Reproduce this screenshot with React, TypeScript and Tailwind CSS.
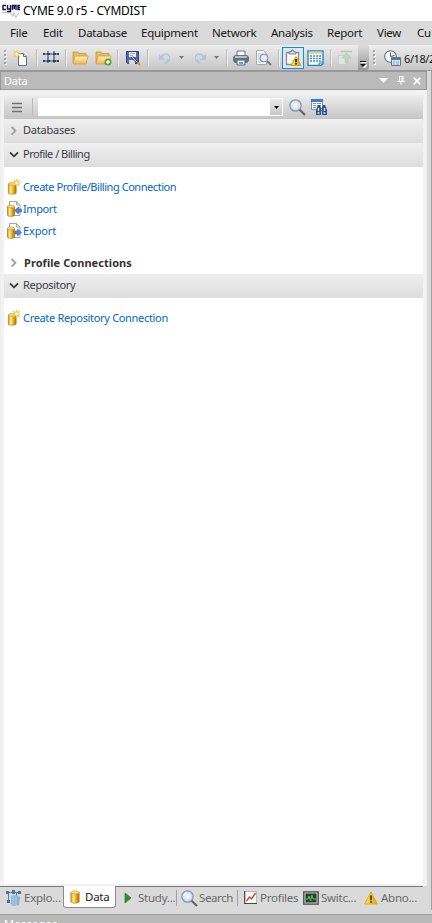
import React from "react";

type IconProps = { className?: string };
type Kids = { children?: React.ReactNode; className?: string; w?: number; h?: number };

function Icon({ children, className = "", w = 16, h = 16 }: Kids) {
  return (
    <svg className={`block shrink-0 ${className}`} width={w} height={h} viewBox={`0 0 ${w} ${h}`} fill="none">
      {children}
    </svg>
  );
}

function Gradients() {
  return (
    <svg width="0" height="0" className="absolute">
      <defs>
        <linearGradient id="gold" x1="0" x2="1" y1="0" y2="0">
          <stop offset="0" stopColor="#c58a16" />
          <stop offset=".3" stopColor="#fff0a0" />
          <stop offset=".6" stopColor="#efb51c" />
          <stop offset="1" stopColor="#a96d08" />
        </linearGradient>
        <linearGradient id="folder" x1="0" x2="0" y1="0" y2="1">
          <stop offset="0" stopColor="#fff0b8" />
          <stop offset="1" stopColor="#ecb952" />
        </linearGradient>
        <radialGradient id="lens">
          <stop offset="0" stopColor="#ffffff" />
          <stop offset="1" stopColor="#bdd3f6" />
        </radialGradient>
        <linearGradient id="warn" x1="0" x2="1" y1="0" y2="0">
          <stop offset="0" stopColor="#ffe54a" />
          <stop offset="1" stopColor="#eda500" />
        </linearGradient>
      </defs>
    </svg>
  );
}

const Logo = () => (
  <Icon w={18} h={16}>
    <path d="M0 9.5h7l2 1 2 3 1-4 2 5 2-4h1" stroke="#b4b4c4" strokeWidth=".8" />
    <path
      d="M4 2.5H1v4h3M5.5 2v4h3M8.5 2v6.5H5M10.5 7V2.5h3.5V7M12.3 2.5V6M18 2.5h-2v4h2M16 4.5h2"
      stroke="#11114f"
      strokeWidth="1.4"
    />
  </Icon>
);

const NewFile = () => (
  <Icon>
    <path d="M5.5 3.5h5l3 3v9h-8z" fill="#fff" stroke="#66758c" />
    <path d="M10.5 3.5v3h3" stroke="#66758c" fill="#dce6f5" />
    <path d="M4 0v8M0 4h8M1 1l6 6M7 1L1 7" stroke="#eccb5c" strokeWidth="1.1" />
    <circle cx="4" cy="4" r="1.5" fill="#fffbd8" />
  </Icon>
);

const Network = () => (
  <Icon>
    <path d="M1 4h14M1 11h14M5 1v12M11 1v12" stroke="#27456f" strokeWidth="1.1" />
    <path d="M0 3h2v2H0zM14 3h2v2h-2zM0 10h2v2H0zM14 10h2v2h-2zM4 3h3v2H4zM10 3h3v2h-3zM4 10h3v2H4zM10 10h3v2h-3z" fill="#27456f" />
  </Icon>
);

const Folder = ({ plus = false }: { plus?: boolean }) => (
  <Icon w={17}>
    <path d="M1 13V2h5l1 1.5h7V13z" fill="#e7bb62" stroke="#c99537" strokeWidth=".8" />
    <path d="M1 14L3 6h13l-2 8z" fill="url(#folder)" stroke="#d09b3c" strokeWidth=".8" />
    {plus && (
      <>
        <circle cx="13" cy="12" r="3.5" fill="#5ca226" />
        <path d="M13 10v4M11 12h4" stroke="#fff" strokeWidth="1.3" />
      </>
    )}
  </Icon>
);

const Save = () => (
  <Icon>
    <path d="M1.5 1.5h12v12h-11l-1-1z" fill="#5868b8" stroke="#303e83" />
    <path d="M4 2h7v5H4z" fill="#e9eef9" />
    <path d="M5 3.5h5M5 5.5h3" stroke="#9ba8cb" />
    <path d="M4 10h6v4H4z" fill="#d5d9e8" />
    <path d="M7 7l6 6" stroke="#39424d" strokeWidth="2.4" />
    <path d="M7 7l5 5" stroke="#e0e0d6" strokeWidth="1" />
    <path d="M12 12l3 3" stroke="#c2903b" strokeWidth="2" />
  </Icon>
);

const Undo = ({ flip = false }: { flip?: boolean }) => (
  <Icon w={14} h={14} className={flip ? "-scale-x-100" : ""}>
    <path d="M1 3v6h6z" fill="#b4c3df" />
    <path d="M3.5 6C6 2.5 12 2.500 11 7.500c-.5 2.500-2 4-4.500 5" stroke="#b4c3df" strokeWidth="2.400" />
    <path d="M5 5.500c3-2.500 7-1 5.500 2.500" stroke="#dce5f5" strokeWidth=".8" />
  </Icon>
);

const Printer = () => (
  <Icon>
    <path d="M4 6V1h8v5" fill="#f9fbff" stroke="#687485" />
    <path d="M2 5h12l2 2v4l-2 2H2l-2-2V7z" fill="#68727f" />
    <path d="M2 6h12v2H2z" fill="#b8bec6" />
    <path d="M4 10h8v5H4z" fill="#e7f2ff" stroke="#586779" />
    <path d="M6 12h4v2H6z" fill="#5ea5df" />
  </Icon>
);

const Preview = () => (
  <Icon w={17}>
    <path d="M1.5.5h7l3 3v11h-10z" fill="#f8f8f8" stroke="#a3a8ae" />
    <path d="M3 4h5M3 6h4M3 8h3M3 10h3M3 12h4" stroke="#b9c0c9" />
    <circle cx="9" cy="8" r="4" fill="url(#lens)" stroke="#8594ab" />
    <path d="M12 11l4 4" stroke="#88756c" strokeWidth="2" />
  </Icon>
);

const Warning = ({ size = 14 }: { size?: number }) => (
  <svg className="block shrink-0" width={size} height={size} viewBox="0 0 14 14">
    <path d="M7 1L13.4 13H.6z" fill="url(#warn)" stroke="#dca518" strokeWidth=".9" strokeLinejoin="round" />
    <path d="M7 4.5v4.7M7 10.3v1.5" stroke="#222" strokeWidth="1.5" />
  </svg>
);

const Clipboard = () => (
  <Icon w={18} h={18}>
    <path d="M2.5 3.5h12v12h-12z" fill="#fff" stroke="#9b8a70" strokeWidth="1.3" />
    <path d="M5 5V3h2l1-2h1l1 2h2v2z" fill="#e2e5e9" stroke="#7b7c80" />
    <path d="M12 7.5L17 16.5H7z" fill="url(#warn)" stroke="#d7a100" strokeLinejoin="round" />
    <path d="M12 10v3.2M12 14v1.5" stroke="#111" strokeWidth="1.5" />
  </Icon>
);

const Table = () => (
  <Icon w={17}>
    <path d="M1 .8h15v13l-2 1.5H1z" fill="#fff" stroke="#1683c4" strokeWidth="1.3" />
    <path d="M2 2h13v2H2z" fill="#ecd283" />
    <path d="M3 6h2M6 6h2M9 6h2M12 6h2M3 8.5h2M6 8.5h2M9 8.5h2M12 8.5h2M3 11h2M6 11h2M9 11h2M12 11h2" stroke="#3e8fca" strokeWidth="1.4" />
    <path d="M12 15v-2h4" stroke="#1683c4" />
  </Icon>
);

const Upload = () => (
  <Icon>
    <path d="M1.5 5.5h8v9h-8z" fill="#e0e6e6" stroke="#c2cfcf" />
    <path d="M4 1.5h11" stroke="#b3c8a8" strokeWidth="1.5" />
    <path d="M9.5 3L14 8h-3v5H8V8H5z" fill="#c6d6ba" stroke="#b2c4a5" strokeWidth=".6" />
  </Icon>
);

const Clock = () => (
  <Icon w={17}>
    <circle cx="6.5" cy="6.5" r="5.8" fill="#f8f8f8" stroke="#69717b" strokeWidth="1.1" />
    <path d="M6.5 2.5v4l4-1" stroke="#4b5867" />
    <path d="M7.5 7.5h9v8h-9z" fill="#d7e4ef" stroke="#567691" />
    <path d="M8 8h8v2H8z" fill="#547899" />
    <path d="M9 12h2M12 12h3M9 14h2M12 14h3" stroke="#8ba6bc" />
  </Icon>
);

const Search = () => (
  <Icon w={17} h={17}>
    <circle cx="6.5" cy="6.5" r="5.7" fill="url(#lens)" stroke="#8993a9" strokeWidth="1.2" />
    <path d="M2.5 6a4 4 0 0 1 3-3" stroke="#fff" strokeWidth="1.2" />
    <path d="M10.7 10.7L16 16" stroke="#65615f" strokeWidth="2.1" />
  </Icon>
);

const FindTable = () => (
  <Icon w={17} h={17}>
    <path d="M.5.5h11v10H.5z" fill="#fff" stroke="#6f8fc6" />
    <path d="M0 0h12v3H0z" fill="#3f78d7" />
    <path d="M2 4.5h3M6 4.5h4M2 6.5h3M6 6.5h4M2 8.5h3" stroke="#8793a5" />
    <path d="M7 6h2l1 3h1l1-3h2l2 5v5h-5v-4h-1v4H5v-5z" fill="#29518e" />
    <path d="M7.5 9v3M6.5 14h2M13.5 9v3M12.5 14h2M10 10.5h1" stroke="#dceafd" strokeWidth="1.4" />
  </Icon>
);

const NewDatabase = () => (
  <Icon w={14}>
    <path d="M1.3 5v9c0 1.6 7.9 1.6 7.9 0V5z" fill="url(#gold)" stroke="#b57e13" strokeWidth=".6" />
    <ellipse cx="5.2" cy="5" rx="3.9" ry="1.4" fill="#f7dd78" stroke="#bb8b2a" strokeWidth=".6" />
    <path d="M9.5 0v8M5.5 4h8M6.5 1l6 6M12.5 1l-6 6" stroke="#f1c640" strokeWidth="1.2" />
    <circle cx="9.5" cy="4" r="1.4" fill="#fff8cf" />
  </Icon>
);

const DataCylinder = () => (
  <Icon w={10} h={14}>
    <path d="M.8 2.5v9.3c0 1.8 8.4 1.8 8.4 0V2.5z" fill="url(#gold)" stroke="#b57e13" strokeWidth=".6" />
    <ellipse cx="5" cy="2.5" rx="4.2" ry="1.6" fill="#f7dd78" stroke="#bb8b2a" strokeWidth=".6" />
  </Icon>
);

const TransferDatabase = ({ out = false }: { out?: boolean }) => (
  <Icon w={16}>
    <path d="M2.5.5h7l3.500 3.500v10.500h-10.500z" fill="#fff" stroke="#a4a4a4" />
    <path d="M9.5.5v3.500h3.500" stroke="#a4a4a4" />
    <path d="M.5 5.5v8.700c0 1.600 7 1.600 7 0V5.500z" fill="url(#gold)" stroke="#a66d11" strokeWidth=".6" />
    <ellipse cx="4" cy="5.500" rx="3.500" ry="1.400" fill="#f7dd78" stroke="#bb8b2a" strokeWidth=".6" />
    <path d={out ? "M8 8h2.500V6l4 3.500-4 3.500v-2H8z" : "M14.500 8h-3V6l-4 3.500 4 3.500v-2h3z"} fill="#5887d8" stroke="#3863ae" strokeWidth=".6" />
  </Icon>
);

const Explorer = () => (
  <Icon w={17}>
    <path d="M0 2.5h15M2.5 2v10M10.5 2v4" stroke="#53799b" />
    <path d="M0 1h3v3H0zM6 0h3v4H6zM12 1h3v3h-3zM1 10h3v3H1z" fill="#4b7297" />
    <path d="M5 6l5-1 4 2-1 8-6 1-2-2z" fill="#82b5d6" />
    <path d="M7 6v9M10 6v9" stroke="#b9d9ec" />
  </Icon>
);

const Play = () => (
  <Icon w={8} h={12}>
    <path d="M1 1l6 5-6 5z" fill="#2d922d" stroke="#176419" strokeWidth=".6" />
  </Icon>
);

const Profiles = () => (
  <Icon w={13} h={14}>
    <path d="M.5.5h12v12H.5z" fill="#fafafa" stroke="#b7b7b7" />
    <path d="M.7 0v12.5H13" stroke="#484848" strokeWidth="1.2" />
    <path d="M2.5 10l3-4 2 2L11.5 2" stroke="#b54f35" strokeWidth="1.4" />
  </Icon>
);

const Switching = () => (
  <Icon w={16} h={14}>
    <path d="M.8.8h14.4v12.4H.8z" fill="#d0d0d0" stroke="#474747" strokeWidth="1.3" />
    <path d="M2.5 2.5h11v9h-11z" fill="#303b35" />
    <path d="M3 8h2l1-3 1.5 5L9 4l1 4h3" stroke="#35dc4a" />
  </Icon>
);

const Chevron = ({ open = false }: { open?: boolean }) => (
  <Icon w={10} h={10}>
    <path d={open ? "M1 2.5l4 3.8 4-3.8" : "M2.5 1l4 3.8-4 3.8"} stroke={open ? "#3b3b3b" : "#a0a0a0"} strokeWidth="1.8" />
  </Icon>
);

const Down = ({ className = "text-[#777]" }: IconProps) => (
  <Icon w={5} h={3} className={className}>
    <path d="M0 0h5L2.5 3z" fill="currentColor" />
  </Icon>
);

const Cell = ({ className = "", children }: Kids) => (
  <div className={`flex h-full shrink-0 items-center justify-center ${className}`}>{children}</div>
);

const Divider = () => <div className="h-[18px] w-px shrink-0 bg-[#bcbcbc] shadow-[1px_0_0_#eee]" />;

const Grip = () => (
  <Icon w={3} h={15}>
    <path d="M0 0h2v2H0zM0 4h2v2H0zM0 8h2v2H0zM0 12h2v2H0z" fill="#a4a4a4" />
    <path d="M2 1h1v2H1V2h1zM2 5h1v2H1V6h1zM2 9h1v2H1v-1h1zM2 13h1v2H1v-1h1z" fill="#fff" />
  </Icon>
);

const menus = [
  ["File", "w-[33px]"],
  ["Edit", "w-[35px]"],
  ["Database", "w-[63px]"],
  ["Equipment", "w-[71px]"],
  ["Network", "w-[59px]"],
  ["Analysis", "w-[56px]"],
  ["Report", "w-[50px]"],
  ["View", "w-[40px]"],
  ["Cu", "w-[15px]"],
];

function Toolbar() {
  return (
    <div className="flex h-[26px] items-center overflow-hidden border-b border-[#999] bg-gradient-to-b from-[#ececec] to-[#c6c6c6]">
      <Cell className="ml-1 w-[3px]"><Grip /></Cell>
      <Cell className="w-[29px] pr-[2px]"><NewFile /></Cell>
      <Divider />
      <Cell className="w-[28px] pt-px"><Network /></Cell>
      <Divider />
      <Cell className="w-[28px]"><Folder /></Cell>
      <Cell className="w-[23px] pr-[5px]"><Folder plus /></Cell>
      <Divider />
      <Cell className="w-[29px] pl-px"><Save /></Cell>
      <Divider />
      <Cell className="w-[31px] pl-[2px]"><Undo /></Cell>
      <Cell className="w-[5px]"><Down /></Cell>
      <Cell className="w-[30px] pl-[2px]"><Undo flip /></Cell>
      <Cell className="w-[5px]"><Down /></Cell>
      <Cell className="w-[7px]" />
      <Divider />
      <Cell className="w-[27px]"><Printer /></Cell>
      <Cell className="w-[18px]"><Preview /></Cell>
      <Cell className="w-[6px]" />
      <Divider />
      <Cell className="w-[3px]" />
      <div className="flex h-[22px] w-[22px] shrink-0 items-center justify-center border border-[#178be0] bg-[#d8e9f8]"><Clipboard /></div>
      <Cell className="w-[23px]"><Table /></Cell>
      <Cell className="w-[3px]" />
      <Divider />
      <Cell className="w-[27px]"><Upload /></Cell>
      <div className="flex h-full w-[11px] shrink-0 items-end justify-center rounded-r-[3px] bg-gradient-to-b from-[#dddddd] to-[#969696] pb-[2px]">
        <Icon w={7} h={7}>
          <path d="M1 1.5h6M2 4h5L4.5 7z" stroke="#fff" fill="#fff" />
          <path d="M0 .5h6" stroke="#111" />
          <path d="M0 3h6L3 6z" fill="#111" />
        </Icon>
      </div>
      <Cell className="ml-1 w-[3px]"><Grip /></Cell>
      <Cell className="ml-[8px] w-[17px]"><Clock /></Cell>
      <span className="ml-[3px] pt-px text-[11px] tracking-[-0.4px] text-[#171717]">6/18/2</span>
    </div>
  );
}

function SectionRow({ label, open = false, tracking = "" }: { label: string; open?: boolean; tracking?: string }) {
  return (
    <div className="flex h-6 items-center bg-gradient-to-b from-[#efefef] to-[#dddddd] pl-[5px]">
      <Chevron open={open} />
      <span className={`ml-1 pb-[3px] text-[#3b3b3f] ${tracking}`}>{label}</span>
    </div>
  );
}

function LinkRow({ icon, label, tracking = "" }: { icon: React.ReactNode; label: string; tracking?: string }) {
  return (
    <div className="flex h-[22px] items-center pl-[3px] text-[#0066cc]">
      <div className="w-4 shrink-0">{icon}</div>
      <span className={`whitespace-nowrap pb-px ${tracking}`}>{label}</span>
    </div>
  );
}

function DataPanel() {
  return (
    <>
      <div className="flex h-[19px] w-[427px] items-center border border-[#999] bg-[#bababa] pl-[3px] text-[11px] text-white">
        <span className="flex-1 tracking-[-0.2px]">Data</span>
        <Icon w={9} h={5}><path d="M0 0h9L4.5 5z" fill="#fff" /></Icon>
        <Icon w={8} h={9} className="ml-[9px]"><path d="M2.5 0v5M2 .5h4M5 0v5M6 0v5M0 5.5h8M4 6v3" stroke="#fff" /></Icon>
        <Icon w={8} h={8} className="ml-2 mr-[5px]"><path d="M.7.7l6.6 6.6M7.3.7L.7 7.3" stroke="#fff" strokeWidth="1.7" /></Icon>
      </div>
      <div className="h-[796px] w-[427px] border-l border-[#eeeeee] bg-[#f2f2f2] pl-[3px] pr-1 pt-[5px] text-[11px]">
        <div className="h-[789px] bg-white">
          <div className="flex h-6 items-center bg-gradient-to-b from-[#ededed] to-[#c5c5c5] pl-2">
            <Icon w={10} h={11}><path d="M0 1.5h10M0 5.5h10M0 9.5h10" stroke="#717171" strokeWidth="1.5" /></Icon>
            <div className="ml-[10px] h-[18px] w-px bg-[#bbb]" />
            <div className="ml-[5px] flex h-[18px] w-[245px] justify-end border border-white bg-white">
              <div className="flex w-3 items-center justify-center bg-gradient-to-b from-[#e9e9e9] to-[#c8c8c8]"><Down className="text-black" /></div>
            </div>
            <div className="ml-[6px]"><Search /></div>
            <div className="ml-[5px]"><FindTable /></div>
          </div>
          <SectionRow label="Databases" tracking="tracking-[-0.22px]" />
          <SectionRow label="Profile / Billing" open tracking="tracking-[-0.5px]" />
          <div className="pt-[9px]">
            <LinkRow icon={<NewDatabase />} label="Create Profile/Billing Connection" tracking="tracking-[-0.45px]" />
            <LinkRow icon={<TransferDatabase />} label="Import" tracking="tracking-[-0.4px]" />
            <LinkRow icon={<TransferDatabase out />} label="Export" tracking="tracking-[-0.15px]" />
          </div>
          <div className="mt-[9px] flex h-[23px] items-center pl-[5px] font-bold text-[#333]">
            <Chevron />
            <span className="ml-[5px] pb-px tracking-[0.06px]">Profile Connections</span>
          </div>
          <SectionRow label="Repository" open tracking="tracking-[-0.3px]" />
          <div className="pt-[9px]">
            <LinkRow icon={<NewDatabase />} label="Create Repository Connection" tracking="tracking-[-0.32px]" />
          </div>
        </div>
      </div>
    </>
  );
}

function BottomTabs() {
  return (
    <div className="flex h-[29px] items-start border-b border-[#a0a0a0] bg-[#dadada] text-[11.5px] text-[#696969]">
      <div className="flex h-[23px] w-[63px] items-center border-t border-[#777] pl-[6px]">
        <Explorer /><span className="ml-px">Explo...</span>
      </div>
      <div className="flex h-[22px] w-[53px] items-center rounded-b-[3px] border border-t-0 border-[#8c8c8c] bg-white pl-[6px] text-[#222]">
        <DataCylinder /><span className="ml-[5px] pt-px">Data</span>
      </div>
      <div className="flex h-[23px] w-[307px] items-center border-t border-[#777]">
        <div className="flex h-4 w-[61px] items-center border-r border-[#a3a3a3] pl-2"><Play /><span className="ml-[6px]">Study...</span></div>
        <div className="flex h-4 w-[61px] items-center border-r border-[#a3a3a3] pl-1"><Search /><span className="ml-px tracking-[-0.4px]">Search</span></div>
        <div className="flex w-[60px] items-center pl-[6px]"><Profiles /><span className="ml-[3px]">Profiles</span></div>
        <div className="flex w-[60px] items-center pl-[5px]"><Switching /><span className="ml-[2px]">Switc...</span></div>
        <div className="flex items-center pl-[6px]"><Warning /><span className="ml-[3px]">Abno...</span></div>
      </div>
      <div className="ml-auto h-6 w-px bg-[#a1a1a1]" />
    </div>
  );
}

export default function App() {
  return (
    <div className="h-[923px] w-[432px] overflow-hidden bg-[#dadada] font-['Noto_Sans','Open_Sans',sans-serif] text-[12px] leading-none tracking-[-0.25px]">
      <Gradients />
      <header className="flex h-[21px] items-center bg-white pl-[2px] text-black">
        <Logo /><span className="ml-[3px]">CYME 9.0 r5 - CYMDIST</span>
      </header>
      <nav className="flex h-6 items-center bg-[#dadada] pl-[10px] text-[11.5px] text-[#151515]">
        {menus.map(([label, width]) => <span key={label} className={`shrink-0 ${width}`}>{label}</span>)}
      </nav>
      <Toolbar />
      <main className="h-[815px] border-r border-[#a1a1a1]"><DataPanel /></main>
      <BottomTabs />
      <div className="h-2 overflow-hidden bg-[#b9b9b9] pl-1 pt-[3px] text-[11px] tracking-[0.3px] text-white">Messages</div>
    </div>
  );
}
